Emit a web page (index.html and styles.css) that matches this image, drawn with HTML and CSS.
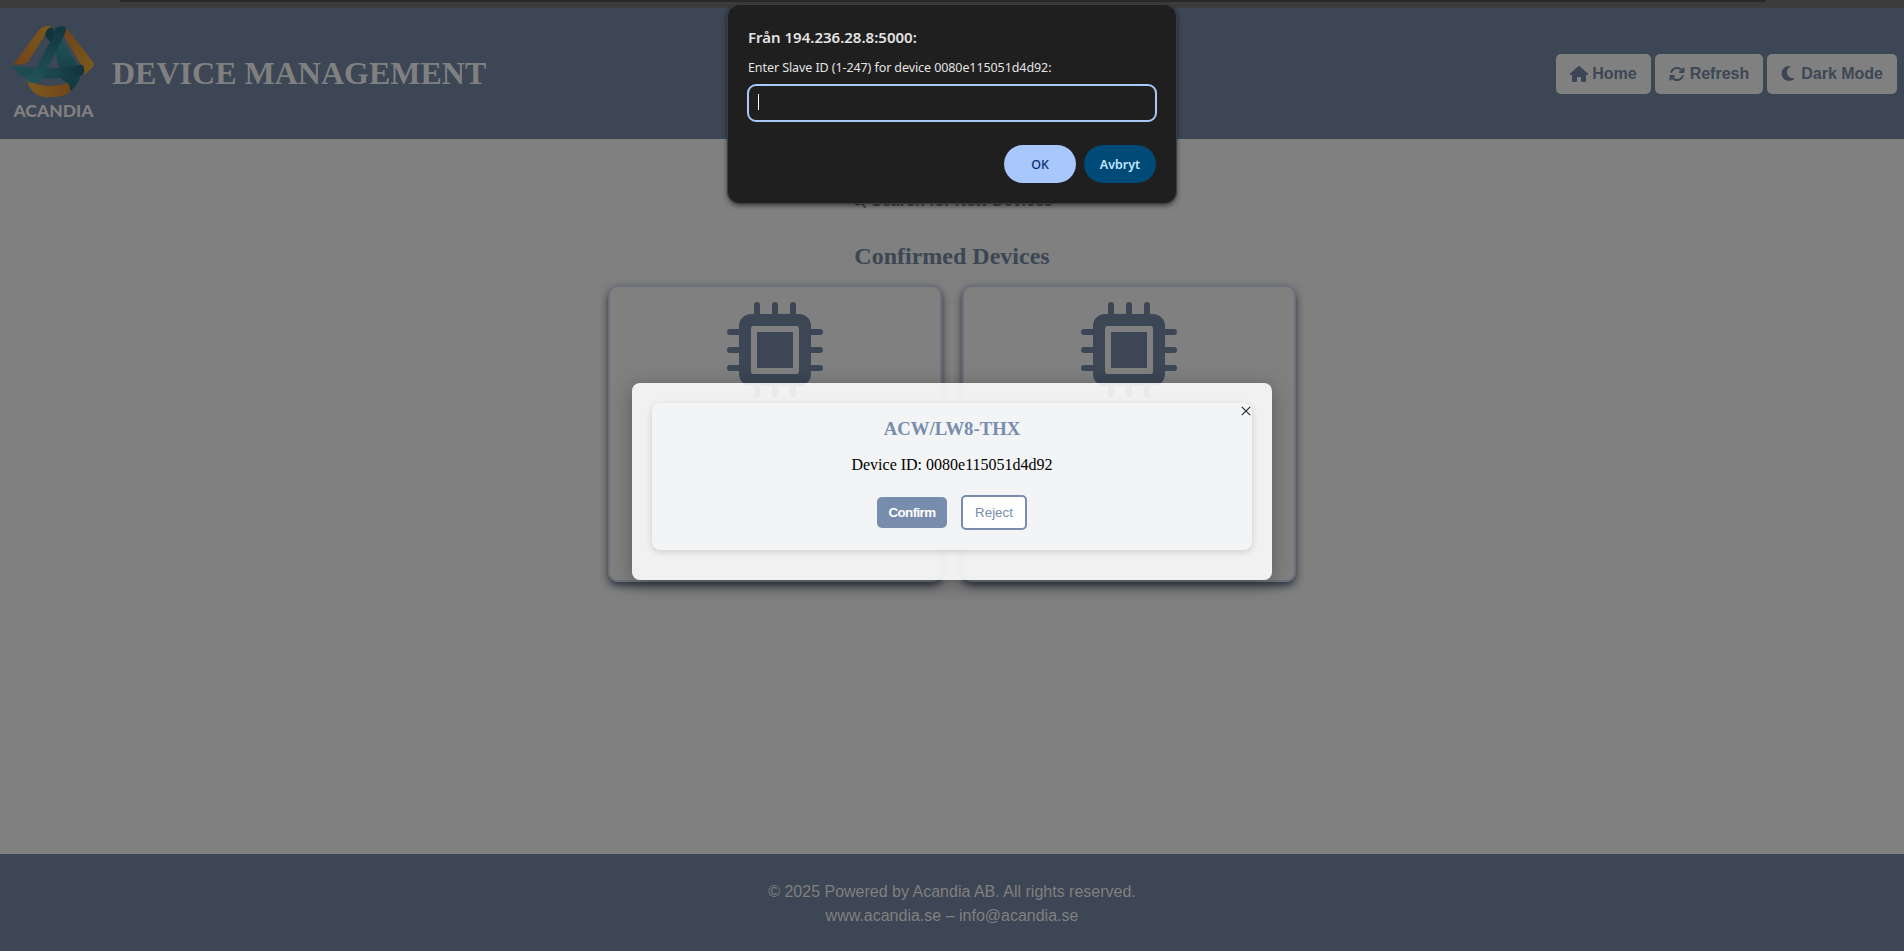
FILE: index.html
```
<!DOCTYPE html>
<html lang="sv">
<head>
<meta charset="utf-8">
<title>Device Management</title>
<link rel="stylesheet" href="styles.css">
</head>
<body>
<svg width="0" height="0" class="defs">
  <defs>
    <linearGradient id="gold" x1="1" y1="0" x2="0" y2="1"><stop offset="0" stop-color="#7b5a1c"/><stop offset="1" stop-color="#73431a"/></linearGradient>
    <linearGradient id="gold2" x1="0" y1="0" x2="1" y2="1"><stop offset="0" stop-color="#70421a"/><stop offset="1" stop-color="#7b5a1c"/></linearGradient>
    <linearGradient id="gold3" x1="0" y1="0" x2="1" y2="0"><stop offset="0" stop-color="#7d5a1c"/><stop offset="1" stop-color="#70461a"/></linearGradient>
    <linearGradient id="teal" x1="0" y1="0" x2="1" y2="0"><stop offset="0" stop-color="#1d4e54"/><stop offset=".55" stop-color="#1b454c"/><stop offset="1" stop-color="#12333b"/></linearGradient>
    <linearGradient id="tealv" x1="0" y1="0" x2="0" y2="1"><stop offset="0" stop-color="#12353d"/><stop offset="1" stop-color="#20545a"/></linearGradient>
    <linearGradient id="tealr" x1="0" y1="0" x2="0" y2="1"><stop offset="0" stop-color="#20545a"/><stop offset="1" stop-color="#12353d"/></linearGradient>
    <symbol id="chip" viewBox="0 0 96 96">
      <path d="M30 3v12M48 3v12M66 3v12M30 81v12M48 81v12M66 81v12M3 30h12M3 48h12M3 66h12M81 30h12M81 48h12M81 66h12" fill="none" stroke="currentColor" stroke-width="6" stroke-linecap="round"/>
      <path fill-rule="evenodd" fill="currentColor" d="M24 12h48a12 12 0 0 1 12 12v48a12 12 0 0 1-12 12H24a12 12 0 0 1-12-12V24a12 12 0 0 1 12-12zM26.500 24a2.500 2.500 0 0 0-2.500 2.500v43a2.500 2.500 0 0 0 2.500 2.500h43a2.500 2.500 0 0 0 2.500-2.500v-43a2.500 2.500 0 0 0-2.500-2.500zM30 30h36v36H30z"/>
    </symbol>
  </defs>
</svg>
<div class="page">
  <div class="chrome"><div class="address"></div></div>
  <header class="header">
    <div class="brand">
      <svg class="logo" width="84" height="95" viewBox="0 0 84 95">
        <path fill="url(#gold)" d="M2 40 28 5Q31 1 37 1L41 2 34 10 17 37Q14 39 3 40z"/>
        <path fill="url(#gold2)" d="M52 6Q54 2 57 5L82 37Q84 40 81 43L73 50Q75 42 69 38L53 11z"/>
        <path fill="#12333b" d="M34 9Q37 1 42 3L44 10 39 17Q35 13 34 9z"/>
        <path fill="url(#gold3)" d="M16 55Q22 59 36 61 50 61 60 57 61 67 56 69 47 73 33 72 20 70 16 55z"/>
        <path fill="url(#tealr)" d="M43 23 51 13 66 40 69 52Q68 59 59 66 60 57 51 55L46 33z"/>
        <path fill="url(#teal)" d="M2 40Q8 43 18 42 48 45 67 40 73 39 73 44 74 49 69 51 45 55 18 53 5 52 2 40z"/>
        <path fill="url(#tealv)" d="M44 3Q50 0 54 2 56 4 53 11L33 50Q29 59 22 58 17 58 15 53 22 49 25 43L42 11Q43 7 44 3z"/>
        <text class="logo-text" x="2.500" y="92" textLength="80" lengthAdjust="spacingAndGlyphs">ACANDIA</text>
      </svg>
      <h1 class="title">DEVICE MANAGEMENT</h1>
    </div>
    <nav class="nav">
      <a class="nav-btn"><svg width="18" height="16" viewBox="0 0 576 512"><path d="M575.800 255.500c0 18-15 32.100-32 32.100h-32l.7 160.200c0 2.700-.2 5.400-.5 8.100V472c0 22.100-17.900 40-40 40h-80c-22.100 0-40-17.900-40-40v-88c0-17.700-14.300-32-32-32h-64c-17.700 0-32 14.300-32 32v88c0 22.100-17.900 40-40 40h-80c-22.100 0-40-17.900-40-40V287.600H32c-18 0-32-14-32-32.100 0-9 3-17 10-24L266.400 8c7-7 15-8 22-8s15 2 21 7l255.400 224.500c8 7 12 15 11 24z"/></svg><span>Home</span></a>
      <a class="nav-btn refresh"><svg width="16" height="16" viewBox="0 0 512 512"><path d="M105.100 202.600c7.700-21.800 20.200-42.300 37.800-59.800 62.500-62.500 163.800-62.500 226.300 0L386.300 160H352c-17.700 0-32 14.300-32 32s14.300 32 32 32h111.900c17.700 0 32-14.300 32-32V80c0-17.700-14.300-32-32-32s-32 14.300-32 32v35.200l-17.500-17.600c-87.500-87.500-229.300-87.500-316.800 0C73.200 122 55.600 150.700 44.800 181.400c-5.900 16.700 2.900 34.900 19.500 40.800s34.900-2.900 40.800-19.600zM39 289.300c-5 1.500-9.800 4.200-13.700 8.200-4 4-6.700 8.800-8.100 14-.8 3-1.200 6-1.200 8.900V432c0 17.700 14.300 32 32 32s32-14.300 32-32v-35.100l17.600 17.500c87.500 87.400 229.300 87.400 316.700 0 24.400-24.400 42.100-53.100 52.900-83.700 5.900-16.700-2.900-34.900-19.500-40.800s-34.900 2.900-40.800 19.500c-7.700 21.800-20.200 42.300-37.800 59.800-62.500 62.500-163.800 62.500-226.300 0L125.600 352H160c17.700 0 32-14.300 32-32s-14.300-32-32-32H48.400c-3.200 0-6.400.4-9.400 1.300z"/></svg><span>Refresh</span></a>
      <a class="nav-btn"><svg class="moon" width="12" height="16" viewBox="0 0 384 512"><path d="M223.500 32C100 32 0 132.300 0 256s100 224 223.500 224c60.600 0 115.500-24.200 155.800-63.400 5-4.900 6.300-12.500 3.100-18.700s-10.100-9.700-17-8.500c-9.800 1.700-19.800 2.600-30.100 2.600-96.900 0-175.500-78.800-175.500-176 0-65.800 36-123.100 89.300-153.300 6.100-3.500 9.200-10.500 7.700-17.300s-7.300-11.900-14.300-12.500c-6.300-.5-12.600-.8-19-.8z"/></svg><span>Dark Mode</span></a>
    </nav>
  </header>
  <main class="main">
    <div class="search"><svg width="14" height="14" viewBox="0 0 512 512"><path d="M416 208c0 45.900-14.900 88.300-40 122.700L502.600 457.400c12.500 12.500 12.500 32.800 0 45.300s-32.800 12.500-45.300 0L330.700 376A208 208 0 1 1 416 208zM208 352a144 144 0 1 0 0-288 144 144 0 1 0 0 288z"/></svg><span>Search for New Devices</span></div>
    <h2 class="subtitle">Confirmed Devices</h2>
    <div class="cards">
      <div class="card"><svg class="chip"><use href="#chip"/></svg></div>
      <div class="card"><svg class="chip"><use href="#chip"/></svg></div>
    </div>
  </main>
  <footer class="footer">
    <div>© 2025 Powered by Acandia AB. All rights reserved.</div>
    <div>www.acandia.se – info@acandia.se</div>
  </footer>
</div>

<section class="popup">
  <div class="device">
    <h3 class="device-name">ACW/LW8-THX</h3>
    <p class="device-id">Device ID: 0080e115051d4d92</p>
    <div class="actions">
      <button class="confirm">Confirm</button>
      <button class="reject">Reject</button>
    </div>
  </div>
  <svg class="close" width="10" height="10" viewBox="0 0 10 10"><path d="M.8.8 9.200 9.200M9.200.8.8 9.200"/></svg>
</section>

<section class="prompt">
  <div class="prompt-title"><span>Från 194.236.28.8:5000:</span></div>
  <div class="prompt-text">Enter Slave ID (1-247) for device 0080e115051d4d92:</div>
  <div class="prompt-input"><span class="caret"></span></div>
  <div class="prompt-actions">
    <button class="ok">OK</button>
    <button class="cancel">Avbryt</button>
  </div>
</section>
</body>
</html>
```
FILE: styles.css
```
* { box-sizing: border-box; }
body { margin: 0; background: #808080; font-family: "Liberation Serif", serif; overflow: hidden; }
h1, h2, h3, p { margin: 0; }
button { border: 0; padding: 0; }
.defs { position: absolute; }
.page { height: 951px; display: flex; flex-direction: column; }

.chrome { height: 8px; background: #3c3c3c; padding: 0 138px 0 120px; }
.address { height: 2px; background: #282828; border-radius: 0 0 6px 6px; }

.header { height: 131px; background: #3c4654; display: flex; justify-content: space-between; align-items: center; padding: 0 7px 0 11px; }
.brand { display: flex; align-items: center; gap: 17px; }
.logo { display: block; margin-bottom: 2px; }
.logo-text { font: 900 17.500px Lato, sans-serif; fill: #808080; }
.title { font-size: 32px; line-height: 36px; color: #808080; margin-bottom: 1px; }
.nav { display: flex; gap: 4px; }
.nav-btn { height: 40px; padding: 0 14px; display: flex; align-items: center; gap: 4px; border-radius: 5px; background: #808080; color: #3c4654; font: bold 16px "Liberation Sans", sans-serif; }
.nav-btn svg { fill: currentColor; }
.refresh { gap: 5px; }
.nav-btn .moon { width: 14px; height: 17px; margin: 0 2px 0 0; }

.main { flex: 1; display: flex; flex-direction: column; align-items: center; color: #3c4654; padding-top: 53px; }
.search { display: flex; align-items: center; gap: 5px; padding-left: 1px; font: bold 16px/18px "Liberation Sans", sans-serif; }
.search svg { fill: currentColor; }
.subtitle { font-size: 24px; line-height: 28px; margin-top: 32px; }
.cards { display: flex; gap: 20px; margin-top: 15px; }
.card { width: 334px; height: 297px; border: 2px solid #6c7179; border-radius: 10px; box-shadow: 0 4px 8px #2b323d; display: flex; justify-content: center; padding-top: 15px; }
.chip { width: 96px; height: 96px; }

.footer { height: 97px; background: #3c4654; color: #808080; font: 16px/24px "Liberation Sans", sans-serif; text-align: center; padding-top: 26px; }

.popup { position: absolute; left: 632px; top: 383px; width: 640px; height: 197px; padding: 20px; border-radius: 8px; background: rgba(255,255,255,.89); box-shadow: 0 4px 20px rgba(0,0,0,.3); }
.device { height: 147px; border-radius: 8px; background: #f3f4f6; box-shadow: 0 2px 6px rgba(0,0,0,.15); text-align: center; padding-top: 15px; }
.device-name { font-size: 18.720px; line-height: 21px; color: #788dad; }
.device-id { font-size: 16px; line-height: 18px; color: #000; margin-top: 17px; }
.actions { display: flex; justify-content: center; align-items: center; gap: 14px; margin-top: 21px; }
.confirm, .reject { font: 13.333px "Liberation Sans", sans-serif; border-radius: 5px; }
.confirm { width: 70px; height: 31px; background: #788dad; color: #fff; font-weight: bold; letter-spacing: -.6px; }
.reject { width: 66px; height: 35px; background: #fff; color: #788dad; border: 2px solid #788dad; }
.close { position: absolute; right: 21px; top: 23px; stroke: #222; stroke-width: 1.1; }

.prompt { position: absolute; left: 728px; top: 5px; width: 448px; height: 198px; padding: 22px 19px 0; border-radius: 12px; background: #1f1f1f; box-shadow: 0 0 0 1px #3d3d3d, 0 2px 5px 1px rgba(0,0,0,.5); font-family: "Noto Sans", sans-serif; color: #e3e3e3; }
.prompt-title { font-size: 15px; line-height: 20px; font-weight: 600; padding-left: 1px; }
.prompt-text { font-size: 12.500px; line-height: 18px; margin-top: 12px; padding-left: 1px; white-space: nowrap; letter-spacing: -.085px; }
.prompt-input { width: 410px; height: 38px; margin-top: 7px; border: 2px solid #a8c7fa; border-radius: 9px; padding: 8px 9px; }
.caret { display: block; width: 1px; height: 16px; background: #fff; }
.prompt-actions { display: flex; justify-content: flex-end; gap: 8px; margin: 23px 1px 0 0; }
.ok, .cancel { width: 72px; height: 38px; border-radius: 19px; font: 600 12.500px "Noto Sans", sans-serif; }
.ok { background: #a8c7fa; color: #062e6f; font-weight: 500; }
.cancel { background: #004a77; color: #c2e7ff; }
```
